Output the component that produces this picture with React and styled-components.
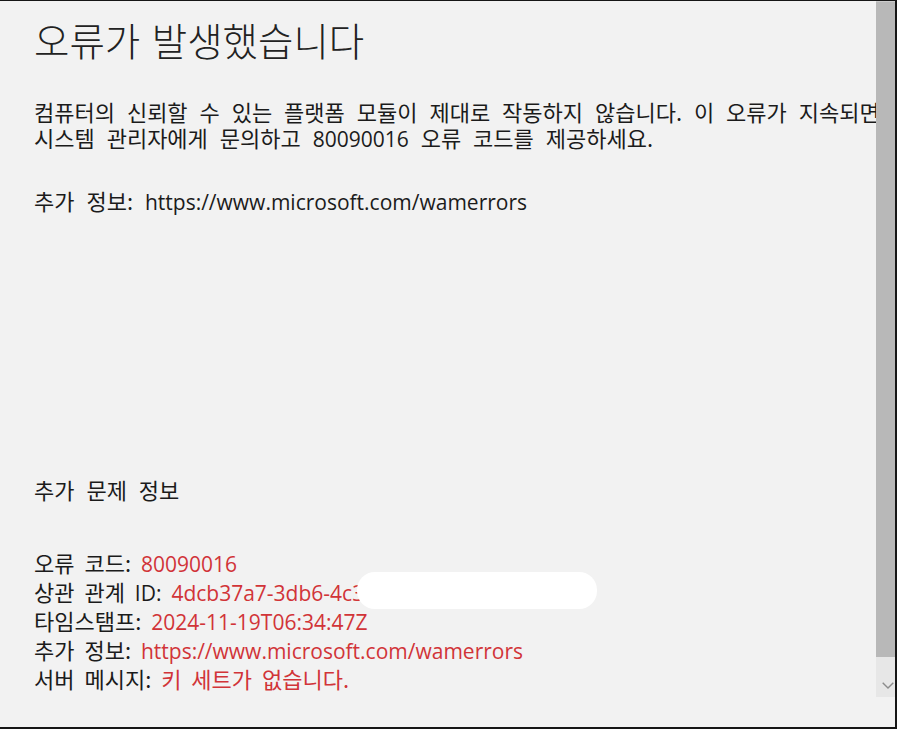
import React from "react";
import styled, { createGlobalStyle } from "styled-components";

const Global = createGlobalStyle`
  html, body { margin: 0; padding: 0; background: #f2f2f2; overflow: hidden; }
  #root { width: 897px; height: 729px; }
`;

const FONT = `"Noto Sans CJK KR", "Open Sans", sans-serif`;
const LATIN = `"Open Sans", "Noto Sans CJK KR", sans-serif`;

const Frame = styled.div`
  box-sizing: border-box;
  width: 897px;
  height: 729px;
  background: #f2f2f2;
  border-top: 1px solid #161616;
  border-right: 2px solid #161616;
  border-bottom: 2px solid #161616;
  display: flex;
  align-items: flex-start;
  font-family: ${FONT};
  color: #1b1b1b;
`;

const Main = styled.main`
  flex: 1;
  min-width: 0;
  height: 726px;
  overflow: hidden;
  padding-left: 34px;
  box-sizing: border-box;
  white-space: nowrap;
`;

const Title = styled.h1`
  margin: 14px 0 0;
  font-size: 38.5px;
  font-weight: 300;
  line-height: 48px;
  color: #222;
  word-spacing: 3px;
`;

const Para = styled.p`
  margin: ${(p) => p.$top || 0}px 0 0;
  font-size: 22px;
  line-height: 26px;
  word-spacing: 7px;
`;

const List = styled.div`
  margin-top: 46px;
  font-size: 22px;
  line-height: 29px;
  word-spacing: 5px;
`;

const Row = styled.div`
  position: relative;
`;

const Latin = styled.span`
  font-family: ${LATIN};
  font-size: 21px;
  line-height: 1;
  word-spacing: 0;
`;

const Value = styled(Latin)`
  color: #d13438;
  font-family: ${(p) => (p.$ko ? FONT : LATIN)};
  font-size: ${(p) => (p.$ko ? 22 : 21)}px;
  word-spacing: ${(p) => (p.$ko ? 5 : 0)}px;
`;

const Redact = styled.span`
  position: absolute;
  left: 323px;
  top: -5px;
  width: 240px;
  height: 37px;
  border-radius: 18px;
  background: #ffffff;
`;

const Scrollbar = styled.div`
  width: 19px;
  height: 696px;
  display: flex;
  flex-direction: column;
`;

const Thumb = styled.div`
  height: 655px;
  background: #b8b8b8;
  border-top: 1px solid #cbcbcb;
`;

const ArrowBox = styled.div`
  flex: 1;
  background: #e7e7e7;
  display: flex;
  align-items: flex-end;
  justify-content: flex-end;
  padding: 0 1px 8px 0;
`;

const Chevron = () => (
  <svg width="12" height="7" viewBox="0 0 12 7" fill="none">
    <path d="M0.7 0.7 L6 6 L11.3 0.7" stroke="#8c8c8c" strokeWidth="1.4" />
  </svg>
);

export default function App() {
  return (
    <>
      <Global />
      <Frame>
        <Main>
          <Title>오류가 발생했습니다</Title>
          <Para $top={35}>
            컴퓨터의 신뢰할 수 있는 플랫폼 모듈이 제대로 작동하지 않습니다. 이 오류가 지속되면
            <br />
            시스템 관리자에게 문의하고 <Latin>80090016</Latin> 오류 코드를 제공하세요.
          </Para>
          <Para $top={37}>
            추가 정보: <Latin>https://www.microsoft.com/wamerrors</Latin>
          </Para>
          <Para $top={263}>추가 문제 정보</Para>
          <List>
            <Row>
              오류 코드: <Value>80090016</Value>
            </Row>
            <Row>
              상관 관계 <Latin>ID:</Latin> <Value>4dcb37a7-3db6-4c3</Value>
              <Redact />
            </Row>
            <Row>
              타임스탬프: <Value>2024-11-19T06:34:47Z</Value>
            </Row>
            <Row>
              추가 정보: <Value>https://www.microsoft.com/wamerrors</Value>
            </Row>
            <Row>
              서버 메시지: <Value $ko>키 세트가 없습니다.</Value>
            </Row>
          </List>
        </Main>
        <Scrollbar>
          <Thumb />
          <ArrowBox>
            <Chevron />
          </ArrowBox>
        </Scrollbar>
      </Frame>
    </>
  );
}
